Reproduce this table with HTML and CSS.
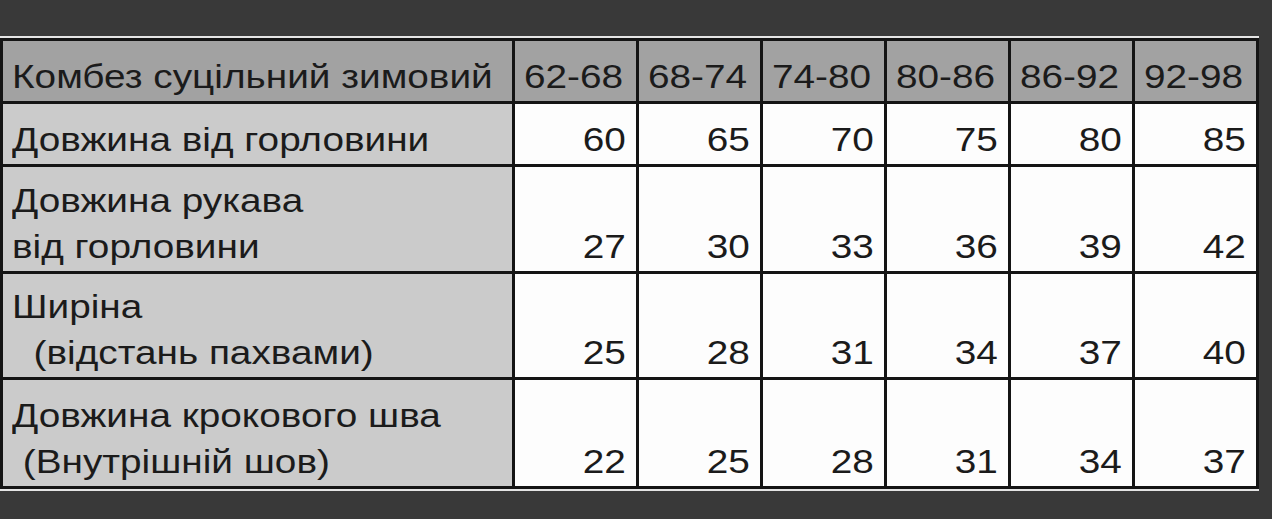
FILE: index.html
```html
<!DOCTYPE html>
<html lang="uk">
<head>
<meta charset="utf-8">
<title>Розмірна сітка</title>
<link rel="stylesheet" href="styles.css">
</head>
<body>
<div class="frame">
  <table class="sizes">
    <colgroup>
      <col class="c-label">
      <col class="c-size"><col class="c-size"><col class="c-size">
      <col class="c-size"><col class="c-size"><col class="c-size">
    </colgroup>
    <thead>
      <tr class="r-head">
        <th class="label"><span class="t">Комбез суцільний зимовий</span></th>
        <th class="size"><span class="t">62-68</span></th>
        <th class="size"><span class="t">68-74</span></th>
        <th class="size"><span class="t">74-80</span></th>
        <th class="size"><span class="t">80-86</span></th>
        <th class="size"><span class="t">86-92</span></th>
        <th class="size"><span class="t">92-98</span></th>
      </tr>
    </thead>
    <tbody>
      <tr class="r-1">
        <th class="label"><span class="t">Довжина від горловини</span></th>
        <td class="num"><span class="t">60</span></td>
        <td class="num"><span class="t">65</span></td>
        <td class="num"><span class="t">70</span></td>
        <td class="num"><span class="t">75</span></td>
        <td class="num"><span class="t">80</span></td>
        <td class="num"><span class="t">85</span></td>
      </tr>
      <tr class="r-2">
        <th class="label"><span class="t">Довжина рукава<br>від горловини</span></th>
        <td class="num"><span class="t">27</span></td>
        <td class="num"><span class="t">30</span></td>
        <td class="num"><span class="t">33</span></td>
        <td class="num"><span class="t">36</span></td>
        <td class="num"><span class="t">39</span></td>
        <td class="num"><span class="t">42</span></td>
      </tr>
      <tr class="r-3">
        <th class="label"><span class="t">Ширіна<br>&nbsp;&nbsp;(відстань пахвами)</span></th>
        <td class="num"><span class="t">25</span></td>
        <td class="num"><span class="t">28</span></td>
        <td class="num"><span class="t">31</span></td>
        <td class="num"><span class="t">34</span></td>
        <td class="num"><span class="t">37</span></td>
        <td class="num"><span class="t">40</span></td>
      </tr>
      <tr class="r-4">
        <th class="label"><span class="t">Довжина крокового шва<br>&nbsp;(Внутрішній шов)</span></th>
        <td class="num"><span class="t">22</span></td>
        <td class="num"><span class="t">25</span></td>
        <td class="num"><span class="t">28</span></td>
        <td class="num"><span class="t">31</span></td>
        <td class="num"><span class="t">34</span></td>
        <td class="num"><span class="t">37</span></td>
      </tr>
    </tbody>
  </table>
</div>
</body>
</html>
```

FILE: styles.css
```css
html, body {
  margin: 0;
  padding: 0;
  background: #393939;
}

body {
  width: 1272px;
  height: 519px;
  overflow: hidden;
  font-family: "Liberation Sans", Arial, sans-serif;
}

.frame {
  margin-top: 36px;
  width: 1259px;
  border-top: 2px solid #e4e4e4;
  border-bottom: 2px solid #e4e4e4;
}

.sizes {
  border-collapse: collapse;
  table-layout: fixed;
  width: 1258px;
}

.c-label { width: 512px; }
.c-size { width: 124px; }

.sizes th,
.sizes td {
  border: 3px solid #141414;
  padding: 0 9px 2px 9px;
  vertical-align: bottom;
  font-size: 34px;
  line-height: 46px;
  font-weight: normal;
  color: #1b1b1b;
  text-align: left;
  white-space: nowrap;
  overflow: visible;
}

.r-head { height: 63px; }
.r-1 { height: 63px; }
.r-2 { height: 107px; }
.r-3 { height: 106px; }
.r-4 { height: 109px; }

.r-head th { background: #a2a2a2; }
.label { background: #cbcbcb; }
.num {
  background: #fdfdfd;
  text-align: right;
}
.sizes .num { text-align: right; padding-right: 10px; }

.t {
  display: inline-block;
  transform: scaleX(1.14);
  transform-origin: left bottom;
}

.num .t {
  transform-origin: right bottom;
}
```
